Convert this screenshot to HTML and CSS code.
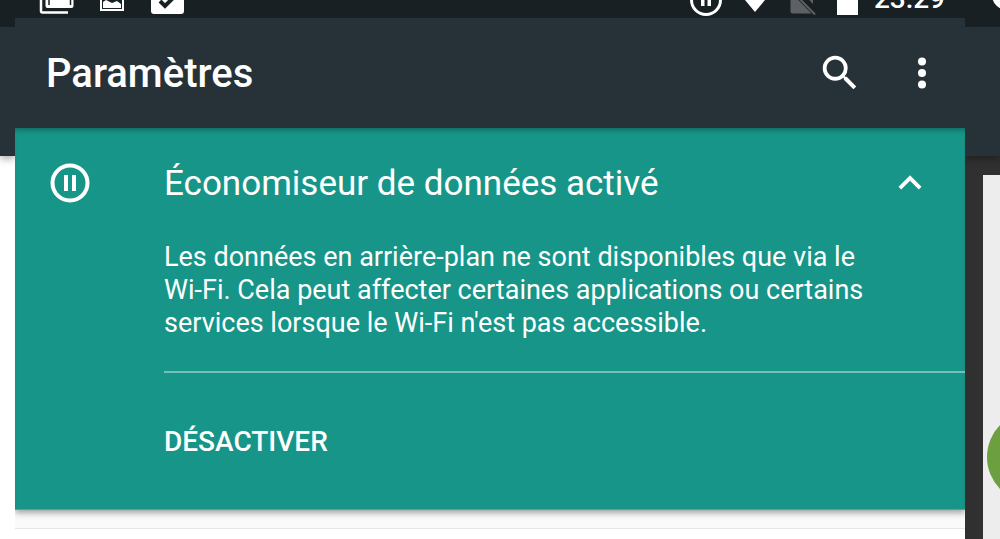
FILE: index.html
```html
<!DOCTYPE html>
<html lang="fr">
<head>
  <meta charset="UTF-8" />
  <meta name="viewport" content="width=device-width, initial-scale=1.0"/>
  <title>Paramètres</title>
  <link rel="stylesheet" href="styles.css">
</head>
<body>
  <div class="screens">
    <div class="side side-left">
      <div class="side-status"></div>
      <div class="side-bar"></div>
    </div>

    <main class="phone">
      <div class="status-bar">
        <div class="status-group">
          <svg class="status-icon" viewBox="0 0 40 40">
            <path d="M5 4v29q0 1.500 1.500 1.500H32" fill="none" stroke="#fff" stroke-width="2.500"/>
            <rect x="9.500" y="2" width="28" height="28" rx="2" fill="#fff"/>
            <path d="M13 6v21M34.500 6v21" stroke="#182024" stroke-width="1.500"/>
          </svg>
          <svg class="status-icon" viewBox="0 0 40 40">
            <path fill="#fff" fill-rule="evenodd" d="M8 9h24v24H8zM10 11v20h20V11z"/>
            <path fill="#fff" d="M11 30v-6l3-2 4 2 2 1 5-2 4 3v4z"/>
          </svg>
          <svg class="status-icon" viewBox="0 0 40 40">
            <rect x="3" y="2" width="33" height="34" rx="3" fill="#fff"/>
            <path d="M12 23l5 5 11-11" fill="none" stroke="#182024" stroke-width="4"/>
          </svg>
        </div>
        <div class="status-group status-right">
          <svg class="status-icon" viewBox="0 0 40 40">
            <circle cx="20" cy="22" r="14.500" fill="none" stroke="#fff" stroke-width="3"/>
            <path fill="#fff" d="M15 14h3.500v14H15zM21.500 14H25v14h-3.500z"/>
          </svg>
          <svg class="status-icon" viewBox="0 0 40 40">
            <path fill="#fff" d="M22 34L2 10q20-14 40 0z"/>
          </svg>
          <svg class="status-icon" viewBox="0 0 40 40">
            <path fill="#5d6163" d="M10.500 14l21 21.500h-19q-2 0-2-2zM20 5h13v21L17 9z"/>
            <path d="M9 10l26 26.500" stroke="#5d6163" stroke-width="2"/>
            <path d="M11 10l22 22" stroke="#182024" stroke-width="1"/>
          </svg>
          <svg class="status-icon" viewBox="0 0 40 40">
            <path fill="#fff" d="M10 6h5V2h11v4h5v31H10z"/>
          </svg>
          <span class="clock">23:29</span>
        </div>
      </div>

      <header class="app-bar">
        <h1>Paramètres</h1>
        <button class="icon-btn" type="button" aria-label="Rechercher">
          <svg viewBox="0 0 24 24"><path d="M15.500 14h-.79l-.28-.27A6.471 6.471 0 0 0 16 9.500 6.500 6.500 0 1 0 9.500 16c1.610 0 3.090-.59 4.230-1.570l.27.28v.79l5 4.990L20.490 19l-4.990-5zm-6 0C7.010 14 5 11.990 5 9.500S7.010 5 9.500 5 14 7.010 14 9.500 11.990 14 9.500 14z"/></svg>
        </button>
        <button class="icon-btn" type="button" aria-label="Plus d'options">
          <svg viewBox="0 0 24 24"><circle cx="12" cy="6" r="2.100"/><circle cx="12" cy="12" r="2.100"/><circle cx="12" cy="18" r="2.100"/></svg>
        </button>
      </header>

      <section class="notice">
        <div class="notice-head">
          <svg class="saver-icon" viewBox="0 0 40 40">
            <circle cx="20" cy="20" r="17.500" fill="none" stroke="#fff" stroke-width="4"/>
            <path fill="#fff" d="M14 12h4v16h-4zM22 12h4v16h-4z"/>
          </svg>
          <h2>Économiseur de données activé</h2>
          <button class="icon-btn" type="button" aria-label="Réduire">
            <svg viewBox="0 0 24 24"><path d="M12 8l-6 6 1.410 1.410L12 10.830l4.590 4.580L18 14z"/></svg>
          </button>
        </div>
        <div class="notice-body">
          <p>Les données en arrière-plan ne sont disponibles que via le Wi-Fi. Cela peut affecter certaines applications ou certains services lorsque le Wi-Fi n'est pas accessible.</p>
          <div class="notice-actions">
            <button class="text-btn" type="button">DÉSACTIVER</button>
          </div>
        </div>
      </section>

      <div class="settings-list"></div>
    </main>

    <div class="side side-right">
      <div class="side-status"><span class="side-dot"></span></div>
      <div class="side-bar"></div>
      <div class="side-page"><span class="avatar"></span></div>
    </div>
  </div>
</body>
</html>
```
FILE: styles.css
```css
* {
  box-sizing: border-box;
}

body {
  margin: 0;
  font-family: Roboto, "Noto Sans", sans-serif;
  background-color: #fff;
  color: #fff;
}

h1, h2, p {
  margin: 0;
}

.screens {
  display: flex;
  height: 100vh;
  overflow: hidden;
}

/* neighbouring screens */
.side {
  display: flex;
  flex-direction: column;
  overflow: hidden;
}

.side-left {
  width: 15px;
}

.side-right {
  width: 35px;
  background-color: #303030;
}

.side-status {
  flex: none;
  height: 27px;
  background-color: #182024;
  overflow: hidden;
}

.side-bar {
  flex: none;
  height: 129px;
  background-color: #273238;
  box-shadow: 0 2px 8px rgba(0,0,0,0.4);
  clip-path: inset(0 0 -16px 0);
}

.side-dot {
  display: block;
  width: 30px;
  height: 30px;
  margin: -20px 0 0 27px;
  border-radius: 50%;
  background-color: #fff;
}

.side-page {
  flex: 1;
  margin: 19px 0 0 18px;
  padding: 236px 0 0 4px;
  background-color: #ededed;
}

.avatar {
  display: block;
  width: 92px;
  height: 92px;
  border-radius: 50%;
  background-color: #6b9f40;
}

/* main screen */
.phone {
  flex: 1;
  display: flex;
  flex-direction: column;
  min-width: 0;
  background-color: #fafafa;
}

.status-bar {
  flex: none;
  display: flex;
  justify-content: space-between;
  align-items: flex-end;
  height: 18px;
  padding: 0 20px 0 21px;
  background-color: #182024;
  overflow: hidden;
}

.status-group {
  display: flex;
  align-items: flex-end;
  gap: 16px;
}

.status-right {
  gap: 7px;
}

.status-icon {
  display: block;
  width: 40px;
  height: 40px;
}

.clock {
  padding-bottom: 3px;
  font-size: 28px;
  font-weight: 500;
  line-height: 32px;
}

.app-bar {
  flex: none;
  display: flex;
  align-items: center;
  gap: 36px;
  height: 110px;
  padding: 0 20px 0 31px;
  background-color: #273238;
}

.app-bar h1 {
  flex: 1;
  font-size: 40px;
  font-weight: 500;
}

.icon-btn {
  flex: none;
  width: 46px;
  height: 46px;
  padding: 0;
  border: none;
  background: none;
  cursor: pointer;
}

.icon-btn svg {
  display: block;
  width: 46px;
  height: 46px;
  fill: #fff;
}

.notice {
  flex: none;
  background-color: #179588;
  border-bottom: 1px solid #45aa9f;
  box-shadow: inset 0 5px 5px -3px rgba(0,0,0,0.3), 0 3px 6px rgba(0,0,0,0.35);
  clip-path: inset(0 0 -16px 0);
}

.notice-head {
  display: flex;
  align-items: center;
  height: 110px;
  padding: 0 32px 0 35px;
}

.notice-head h2 {
  flex: 1;
  font-size: 35px;
  font-weight: 400;
}

.saver-icon {
  width: 40px;
  height: 40px;
  margin-right: 74px;
}

.notice-body {
  padding: 3px 0 0 149px;
}

.notice-body p {
  padding: 0 80px 31px 0;
  font-size: 27px;
  line-height: 33px;
}

.notice-actions {
  display: flex;
  align-items: center;
  height: 138px;
  border-top: 2px solid #74bfb8;
}

.text-btn {
  padding: 0;
  border: none;
  background: none;
  color: #fff;
  font-family: inherit;
  font-size: 28px;
  font-weight: 500;
  cursor: pointer;
}

.settings-list {
  flex: 1;
  margin-top: 18px;
  border-top: 1px solid #e6e6e6;
  background-color: #fff;
}
```
